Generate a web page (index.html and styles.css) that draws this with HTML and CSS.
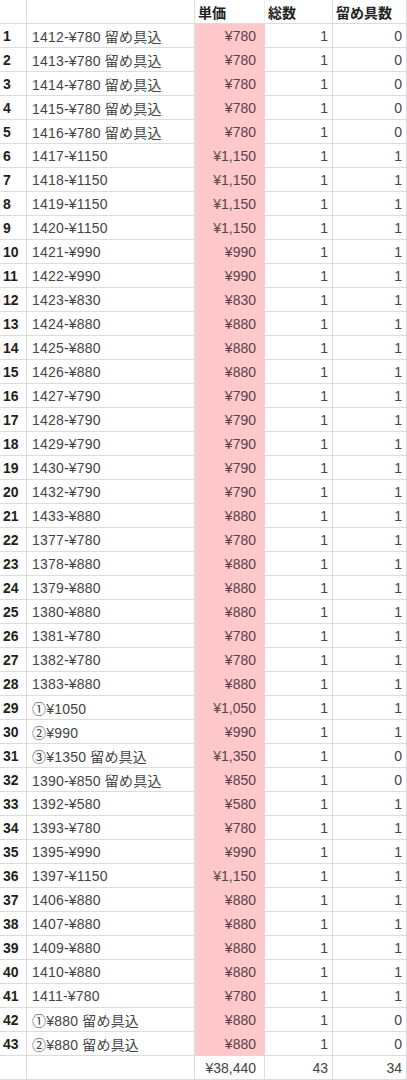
FILE: index.html
```html
<!DOCTYPE html>
<html lang="ja">
<head>
<meta charset="utf-8">
<link rel="stylesheet" href="styles.css">
</head>
<body>
<div class="sheet">
  <div class="c rn"></div><div class="c"></div><div class="c h hp">単価</div><div class="c h">総数</div><div class="c h">留め具数</div>
  <div class="c rn">1</div><div class="c t">1412-¥780 留め具込</div><div class="c p">¥780</div><div class="c n">1</div><div class="c n">0</div>
  <div class="c rn">2</div><div class="c t">1413-¥780 留め具込</div><div class="c p">¥780</div><div class="c n">1</div><div class="c n">0</div>
  <div class="c rn">3</div><div class="c t">1414-¥780 留め具込</div><div class="c p">¥780</div><div class="c n">1</div><div class="c n">0</div>
  <div class="c rn">4</div><div class="c t">1415-¥780 留め具込</div><div class="c p">¥780</div><div class="c n">1</div><div class="c n">0</div>
  <div class="c rn">5</div><div class="c t">1416-¥780 留め具込</div><div class="c p">¥780</div><div class="c n">1</div><div class="c n">0</div>
  <div class="c rn">6</div><div class="c t">1417-¥1150</div><div class="c p">¥1,150</div><div class="c n">1</div><div class="c n">1</div>
  <div class="c rn">7</div><div class="c t">1418-¥1150</div><div class="c p">¥1,150</div><div class="c n">1</div><div class="c n">1</div>
  <div class="c rn">8</div><div class="c t">1419-¥1150</div><div class="c p">¥1,150</div><div class="c n">1</div><div class="c n">1</div>
  <div class="c rn">9</div><div class="c t">1420-¥1150</div><div class="c p">¥1,150</div><div class="c n">1</div><div class="c n">1</div>
  <div class="c rn">10</div><div class="c t">1421-¥990</div><div class="c p">¥990</div><div class="c n">1</div><div class="c n">1</div>
  <div class="c rn">11</div><div class="c t">1422-¥990</div><div class="c p">¥990</div><div class="c n">1</div><div class="c n">1</div>
  <div class="c rn">12</div><div class="c t">1423-¥830</div><div class="c p">¥830</div><div class="c n">1</div><div class="c n">1</div>
  <div class="c rn">13</div><div class="c t">1424-¥880</div><div class="c p">¥880</div><div class="c n">1</div><div class="c n">1</div>
  <div class="c rn">14</div><div class="c t">1425-¥880</div><div class="c p">¥880</div><div class="c n">1</div><div class="c n">1</div>
  <div class="c rn">15</div><div class="c t">1426-¥880</div><div class="c p">¥880</div><div class="c n">1</div><div class="c n">1</div>
  <div class="c rn">16</div><div class="c t">1427-¥790</div><div class="c p">¥790</div><div class="c n">1</div><div class="c n">1</div>
  <div class="c rn">17</div><div class="c t">1428-¥790</div><div class="c p">¥790</div><div class="c n">1</div><div class="c n">1</div>
  <div class="c rn">18</div><div class="c t">1429-¥790</div><div class="c p">¥790</div><div class="c n">1</div><div class="c n">1</div>
  <div class="c rn">19</div><div class="c t">1430-¥790</div><div class="c p">¥790</div><div class="c n">1</div><div class="c n">1</div>
  <div class="c rn">20</div><div class="c t">1432-¥790</div><div class="c p">¥790</div><div class="c n">1</div><div class="c n">1</div>
  <div class="c rn">21</div><div class="c t">1433-¥880</div><div class="c p">¥880</div><div class="c n">1</div><div class="c n">1</div>
  <div class="c rn">22</div><div class="c t">1377-¥780</div><div class="c p">¥780</div><div class="c n">1</div><div class="c n">1</div>
  <div class="c rn">23</div><div class="c t">1378-¥880</div><div class="c p">¥880</div><div class="c n">1</div><div class="c n">1</div>
  <div class="c rn">24</div><div class="c t">1379-¥880</div><div class="c p">¥880</div><div class="c n">1</div><div class="c n">1</div>
  <div class="c rn">25</div><div class="c t">1380-¥880</div><div class="c p">¥880</div><div class="c n">1</div><div class="c n">1</div>
  <div class="c rn">26</div><div class="c t">1381-¥780</div><div class="c p">¥780</div><div class="c n">1</div><div class="c n">1</div>
  <div class="c rn">27</div><div class="c t">1382-¥780</div><div class="c p">¥780</div><div class="c n">1</div><div class="c n">1</div>
  <div class="c rn">28</div><div class="c t">1383-¥880</div><div class="c p">¥880</div><div class="c n">1</div><div class="c n">1</div>
  <div class="c rn">29</div><div class="c t">①¥1050</div><div class="c p">¥1,050</div><div class="c n">1</div><div class="c n">1</div>
  <div class="c rn">30</div><div class="c t">②¥990</div><div class="c p">¥990</div><div class="c n">1</div><div class="c n">1</div>
  <div class="c rn">31</div><div class="c t">③¥1350 留め具込</div><div class="c p">¥1,350</div><div class="c n">1</div><div class="c n">0</div>
  <div class="c rn">32</div><div class="c t">1390-¥850 留め具込</div><div class="c p">¥850</div><div class="c n">1</div><div class="c n">0</div>
  <div class="c rn">33</div><div class="c t">1392-¥580</div><div class="c p">¥580</div><div class="c n">1</div><div class="c n">1</div>
  <div class="c rn">34</div><div class="c t">1393-¥780</div><div class="c p">¥780</div><div class="c n">1</div><div class="c n">1</div>
  <div class="c rn">35</div><div class="c t">1395-¥990</div><div class="c p">¥990</div><div class="c n">1</div><div class="c n">1</div>
  <div class="c rn">36</div><div class="c t">1397-¥1150</div><div class="c p">¥1,150</div><div class="c n">1</div><div class="c n">1</div>
  <div class="c rn">37</div><div class="c t">1406-¥880</div><div class="c p">¥880</div><div class="c n">1</div><div class="c n">1</div>
  <div class="c rn">38</div><div class="c t">1407-¥880</div><div class="c p">¥880</div><div class="c n">1</div><div class="c n">1</div>
  <div class="c rn">39</div><div class="c t">1409-¥880</div><div class="c p">¥880</div><div class="c n">1</div><div class="c n">1</div>
  <div class="c rn">40</div><div class="c t">1410-¥880</div><div class="c p">¥880</div><div class="c n">1</div><div class="c n">1</div>
  <div class="c rn">41</div><div class="c t">1411-¥780</div><div class="c p">¥780</div><div class="c n">1</div><div class="c n">1</div>
  <div class="c rn">42</div><div class="c t">①¥880 留め具込</div><div class="c p">¥880</div><div class="c n">1</div><div class="c n">0</div>
  <div class="c rn">43</div><div class="c t">②¥880 留め具込</div><div class="c p">¥880</div><div class="c n">1</div><div class="c n">0</div>
  <div class="c rn"></div><div class="c"></div><div class="c n tot">¥38,440</div><div class="c n">43</div><div class="c n">34</div>
</div>
</body>
</html>
```

FILE: styles.css
```css
html, body {
  margin: 0;
  padding: 0;
  background: #ffffff;
}

.sheet {
  display: grid;
  grid-template-columns: 27px 168px 70px 68px 74px;
  grid-auto-rows: 24px;
  width: 407px;
  font-family: "Liberation Sans", "Noto Sans CJK JP", sans-serif;
  font-size: 14px;
  color: #444444;
}

.c {
  box-sizing: border-box;
  border-right: 1px solid #dcdcdc;
  border-bottom: 1px solid #dcdcdc;
  display: flex;
  align-items: center;
  padding: 1px 3px 0 4px;
  white-space: nowrap;
  overflow: hidden;
}

.rn {
  font-weight: bold;
  color: #1e1e1e;
  padding-left: 3px;
}

.t {
  padding-left: 5px;
  letter-spacing: 0.2px;
}

.h {
  font-weight: bold;
  color: #222222;
  padding-left: 3px;
}

.hp {
  border-right-color: #ececec;
}

.n {
  justify-content: flex-end;
  padding-right: 4px;
}

.p {
  justify-content: flex-end;
  padding-right: 8px;
  background: #ffc9cc;
  border-right-color: #ffc9cc;
  border-bottom-color: #ffc9cc;
  color: #5a4348;
}

.tot {
  padding-right: 8px;
}
```
